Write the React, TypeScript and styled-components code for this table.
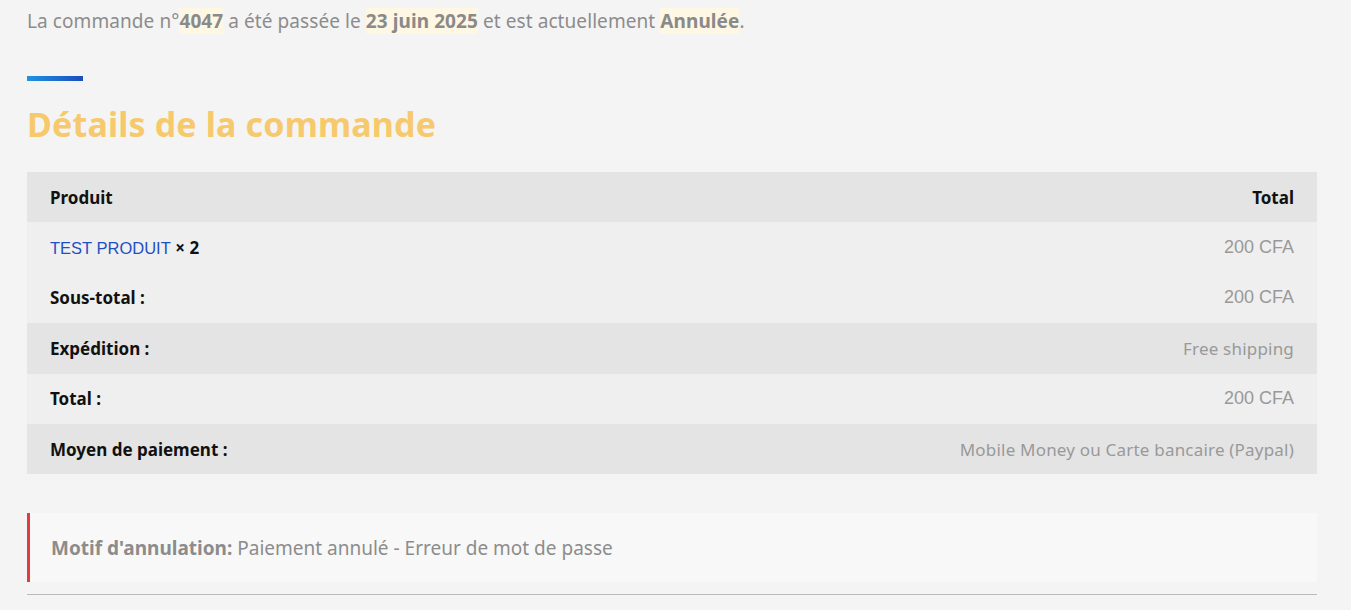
import React from "react";
import styled, { createGlobalStyle } from "styled-components";

const GlobalStyle = createGlobalStyle`
  html, body {
    margin: 0;
    padding: 0;
    background: #f4f4f4;
  }
  body {
    font-family: "Noto Sans", "Open Sans", sans-serif;
  }
`;

const Page = styled.div`
  width: 1290px;
  padding: 7px 34px 0 27px;
`;

const Notice = styled.p`
  margin: 0;
  font-size: 19px;
  line-height: 29px;
  color: #8c8c8c;
  letter-spacing: 0.08px;
`;

const Mark = styled.mark`
  background: #fdf7e4;
  color: #8a8a8a;
  font-weight: 700;
`;

const AccentBar = styled.div`
  width: 56px;
  height: 5px;
  margin-top: 40px;
  background: linear-gradient(90deg, #1f93e2, #1d4cbd);
`;

const Heading = styled.h2`
  margin: 18px 0 0;
  font-size: 34px;
  line-height: 50px;
  font-weight: 700;
  color: #f7c96d;
  letter-spacing: 0.15px;
`;

const Table = styled.table`
  width: 100%;
  margin-top: 23px;
  border-collapse: collapse;
  font-size: 17px;
`;

const Row = styled.tr<{ $shade?: boolean }>`
  height: 50.4px;
  background: ${({ $shade }) => ($shade ? "#e4e4e4" : "#efefef")};
`;

const Cell = styled.td<{ $right?: boolean; $strong?: boolean; $arial?: boolean }>`
  padding: 0 23px;
  text-align: ${({ $right }) => ($right ? "right" : "left")};
  font-weight: ${({ $strong }) => ($strong ? 700 : 400)};
  color: ${({ $strong }) => ($strong ? "#111" : "#999")};
  font-family: ${({ $arial }) =>
    $arial ? '"Liberation Sans", Arial, sans-serif' : "inherit"};
  font-size: ${({ $arial }) => ($arial ? "18px" : "17px")};
  letter-spacing: ${({ $strong, $arial }) => ($strong || $arial ? "0" : "0.2px")};
`;

const ProductLink = styled.a`
  color: #1f4fc4;
  text-decoration: none;
  font-family: "Liberation Sans", Arial, sans-serif;
  font-size: 16.5px;
  letter-spacing: 0;
`;

const Qty = styled.strong`
  color: #111;
  letter-spacing: 0;
`;

const CancelBox = styled.div`
  margin-top: 39px;
  height: 69px;
  display: flex;
  align-items: center;
  padding-left: 21px;
  background: #f8f8f8;
  border-left: 3px solid #e23a3f;
  font-size: 19px;
  color: #8c8c8c;

  strong {
    margin-right: 5px;
  }
`;

const Rule = styled.hr`
  margin: 12px 0 0;
  border: 0;
  border-top: 1px solid #bbbbbb;
`;

const totals: { label: string; value: string; arial?: boolean }[] = [
  { label: "Sous-total :", value: "200 CFA", arial: true },
  { label: "Expédition :", value: "Free shipping" },
  { label: "Total :", value: "200 CFA", arial: true },
  { label: "Moyen de paiement :", value: "Mobile Money ou Carte bancaire (Paypal)" },
];

export default function App() {
  return (
    <>
      <GlobalStyle />
      <Page>
        <Notice>
          La commande n°<Mark>4047</Mark> a été passée le <Mark>23 juin 2025</Mark> et
          est actuellement <Mark>Annulée</Mark>.
        </Notice>

        <AccentBar />
        <Heading>Détails de la commande</Heading>

        <Table>
          <thead>
            <Row $shade>
              <Cell as="th" $strong>
                Produit
              </Cell>
              <Cell as="th" $strong $right>
                Total
              </Cell>
            </Row>
          </thead>
          <tbody>
            <Row>
              <Cell>
                <ProductLink href="#">TEST PRODUIT</ProductLink> <Qty>× 2</Qty>
              </Cell>
              <Cell $right $arial>
                200 CFA
              </Cell>
            </Row>
          </tbody>
          <tfoot>
            {totals.map((t, i) => (
              <Row key={t.label} $shade={i % 2 === 1}>
                <Cell as="th" $strong>
                  {t.label}
                </Cell>
                <Cell $right $arial={t.arial}>
                  {t.value}
                </Cell>
              </Row>
            ))}
          </tfoot>
        </Table>

        <CancelBox>
          <strong>Motif d'annulation:</strong> Paiement annulé - Erreur de mot de passe
        </CancelBox>
        <Rule />
      </Page>
    </>
  );
}
